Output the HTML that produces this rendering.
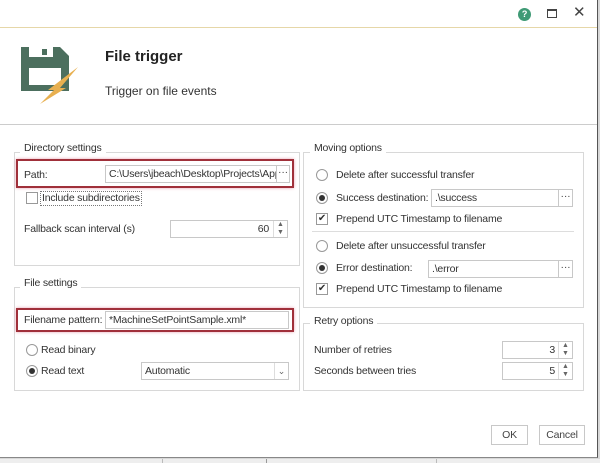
<!DOCTYPE html>
<html><head><style>
*{box-sizing:border-box;margin:0;padding:0}
body{width:600px;height:463px;overflow:hidden;background:#d8d8d8;font-family:"Liberation Sans",sans-serif;font-size:10.5px;letter-spacing:-0.2px;color:#333;position:relative}
.a{position:absolute}
#dlg{left:0;top:0;width:598px;height:458px;background:#fff;border-right:1px solid #555;border-bottom:1px solid #888}
.t{position:absolute;white-space:nowrap;line-height:13px}
.box{position:absolute;border:1px solid #d8d8d8}
.leg{position:absolute;background:#fff;padding:0 4px;white-space:nowrap;line-height:13px}
.inp{position:absolute;border:1px solid #c8c8c8;background:#fff;height:18px;line-height:16px;padding-left:3px;white-space:nowrap;overflow:hidden}
.btn{position:absolute;border:1px solid #c8c8c8;background:#fff;height:18px;text-align:center;line-height:13px;color:#444}
.rad{position:absolute;width:12px;height:12px;border:1px solid #999;border-radius:50%;background:#fff}
.rad.on::after{content:"";position:absolute;left:2px;top:2px;width:6px;height:6px;border-radius:50%;background:#333}
.chk{position:absolute;width:12px;height:12px;border:1px solid #999;background:#fff}
.red{position:absolute;border:2px solid #a0303a;box-shadow:0 0 3px #e8a0b0}
.spin{position:absolute;width:14px;border-left:1px solid #ddd;font-size:7px;line-height:8px;text-align:center;color:#666;letter-spacing:0}
</style></head><body>
<div class="a" id="dlg">
<div class="a" style="left:0;top:27px;width:597px;height:1px;background:#e6d7a8"></div>
<div class="a" style="left:518px;top:8px;width:13px;height:13px;border-radius:50%;background:#3f9a75;color:#fff;font-size:9px;font-weight:bold;text-align:center;line-height:13px">?</div>
<div class="a" style="left:547px;top:9px;width:10px;height:9px;border:1px solid #444;border-top-width:2px"></div>
<div class="t" style="left:573px;top:6px;font-size:15px;color:#444">✕</div>
<svg class="a" style="left:20px;top:46px" width="60" height="60" viewBox="0 0 60 60">
<path d="M1 1h39l9 9v35H1z" fill="#4c6f5e"/>
<rect x="9" y="1" width="24" height="10" fill="#fff"/><rect x="22" y="3" width="5" height="6" fill="#4c6f5e"/>
<rect x="9" y="22" width="32" height="17" fill="#fff"/>
<path d="M58 21 L40 42 L46 42 L20 58 L34 44 L28 44z" fill="#e8b050"/>
</svg>
<div class="t" style="left:105px;top:48px;font-size:15px;font-weight:bold;color:#222;line-height:18px;letter-spacing:0">File trigger</div>
<div class="t" style="left:105px;top:85px;font-size:12px;letter-spacing:0">Trigger on file events</div>
<div class="a" style="left:0;top:124px;width:597px;height:1px;background:#ccc"></div>

<div class="box" style="left:14px;top:152px;width:286px;height:114px"></div>
<div class="leg" style="left:20px;top:142px">Directory settings</div>
<div class="red" style="left:16px;top:159px;width:278px;height:29px"></div>
<div class="t" style="left:24px;top:169px">Path:</div>
<div class="inp" style="left:105px;top:165px;width:172px">C:\Users\jbeach\Desktop\Projects\App</div>
<div class="btn" style="left:276px;top:165px;width:14px;line-height:12px">···</div>
<div class="chk" style="left:26px;top:192px"></div>
<div class="t" style="left:40px;top:191px;border:1px dotted #777;padding:0 1px">Include subdirectories</div>
<div class="t" style="left:24px;top:223px">Fallback scan interval (s)</div>
<div class="inp" style="left:170px;top:220px;width:118px;text-align:right;padding-right:18px">60</div>
<div class="spin" style="left:273px;top:221px">▲<br>▼</div>

<div class="box" style="left:14px;top:287px;width:286px;height:104px"></div>
<div class="leg" style="left:20px;top:277px">File settings</div>
<div class="red" style="left:16px;top:308px;width:278px;height:24px"></div>
<div class="t" style="left:24px;top:314px">Filename pattern:</div>
<div class="inp" style="left:105px;top:311px;width:184px">*MachineSetPointSample.xml*</div>
<div class="rad" style="left:26px;top:344px"></div>
<div class="t" style="left:41px;top:344px">Read binary</div>
<div class="rad on" style="left:26px;top:365px"></div>
<div class="t" style="left:41px;top:365px">Read text</div>
<div class="inp" style="left:141px;top:362px;width:148px">Automatic</div>
<div class="spin" style="left:274px;top:363px;height:16px;line-height:16px;font-size:9px">⌄</div>

<div class="box" style="left:303px;top:152px;width:281px;height:156px"></div>
<div class="leg" style="left:310px;top:142px">Moving options</div>
<div class="rad" style="left:316px;top:169px"></div>
<div class="t" style="left:336px;top:169px">Delete after successful transfer</div>
<div class="rad on" style="left:316px;top:192px"></div>
<div class="t" style="left:336px;top:192px">Success destination:</div>
<div class="inp" style="left:431px;top:189px;width:128px">.\success</div>
<div class="btn" style="left:558px;top:189px;width:15px;line-height:12px">···</div>
<div class="chk" style="left:316px;top:213px;font-size:10px;line-height:10px;text-align:center">✔</div>
<div class="t" style="left:336px;top:213px">Prepend UTC Timestamp to filename</div>
<div class="a" style="left:312px;top:231px;width:262px;height:1px;background:#ddd"></div>
<div class="rad" style="left:316px;top:240px"></div>
<div class="t" style="left:336px;top:240px">Delete after unsuccessful transfer</div>
<div class="rad on" style="left:316px;top:262px"></div>
<div class="t" style="left:336px;top:262px">Error destination:</div>
<div class="inp" style="left:428px;top:260px;width:131px">.\error</div>
<div class="btn" style="left:558px;top:260px;width:15px;line-height:12px">···</div>
<div class="chk" style="left:316px;top:283px;font-size:10px;line-height:10px;text-align:center">✔</div>
<div class="t" style="left:336px;top:283px">Prepend UTC Timestamp to filename</div>

<div class="box" style="left:303px;top:323px;width:281px;height:68px"></div>
<div class="leg" style="left:310px;top:315px">Retry options</div>
<div class="t" style="left:314px;top:344px">Number of retries</div>
<div class="inp" style="left:502px;top:341px;width:71px;text-align:right;padding-right:17px">3</div>
<div class="spin" style="left:558px;top:342px">▲<br>▼</div>
<div class="t" style="left:314px;top:365px">Seconds between tries</div>
<div class="inp" style="left:502px;top:362px;width:71px;text-align:right;padding-right:17px">5</div>
<div class="spin" style="left:558px;top:363px">▲<br>▼</div>

<div class="btn" style="left:491px;top:425px;width:37px;height:20px;line-height:18px">OK</div>
<div class="btn" style="left:539px;top:425px;width:46px;height:20px;line-height:18px">Cancel</div>
</div>
<div class="a" style="left:0;top:459px;width:600px;height:4px;background:#eee"></div>
<div class="a" style="left:162px;top:459px;width:1px;height:4px;background:#bbb"></div>
<div class="a" style="left:266px;top:459px;width:1px;height:4px;background:#999"></div>
<div class="a" style="left:436px;top:459px;width:1px;height:4px;background:#bbb"></div>
</body></html>
